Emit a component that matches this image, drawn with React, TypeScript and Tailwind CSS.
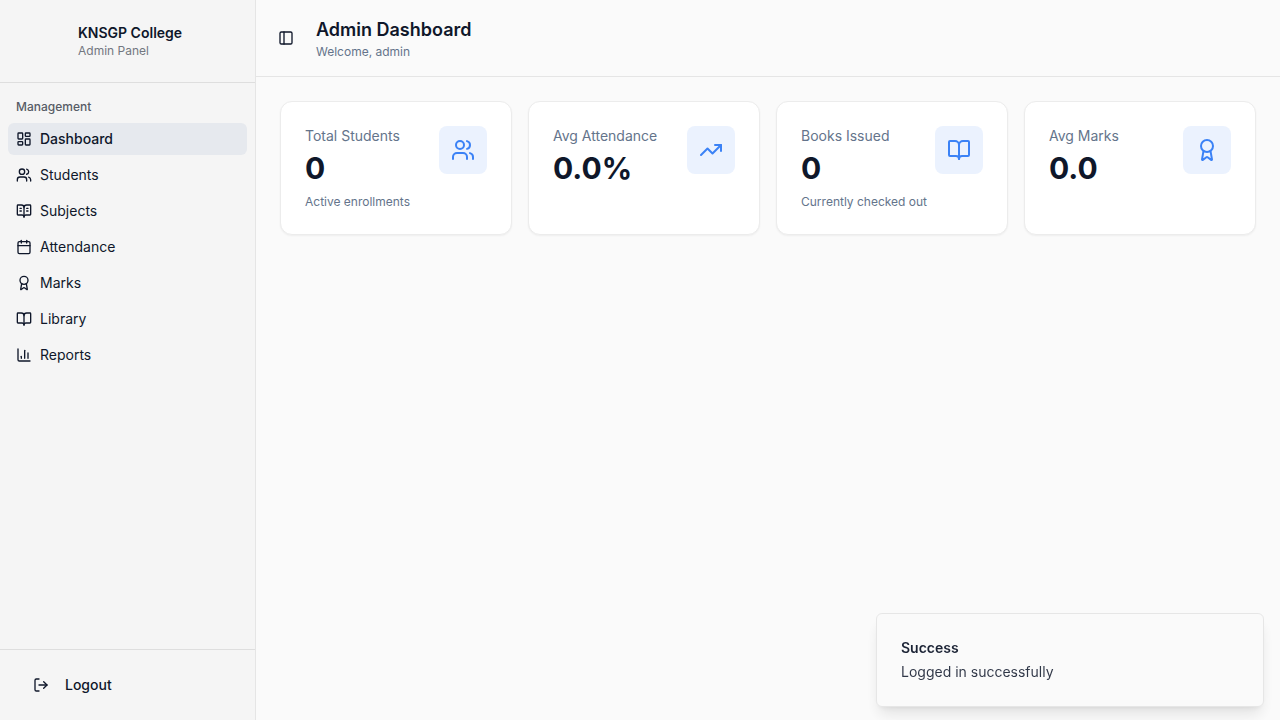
import {
  Award,
  BookOpen,
  BookOpenText,
  Calendar,
  ChartColumn,
  LayoutDashboard,
  LogOut,
  PanelLeft,
  TrendingUp,
  Users,
  type LucideIcon,
} from "lucide-react";

type NavItem = { label: string; icon: LucideIcon; active?: boolean };
type Stat = { label: string; value: string; note?: string; icon: LucideIcon };

const navItems: NavItem[] = [
  { label: "Dashboard", icon: LayoutDashboard, active: true },
  { label: "Students", icon: Users },
  { label: "Subjects", icon: BookOpenText },
  { label: "Attendance", icon: Calendar },
  { label: "Marks", icon: Award },
  { label: "Library", icon: BookOpen },
  { label: "Reports", icon: ChartColumn },
];

const stats: Stat[] = [
  { label: "Total Students", value: "0", note: "Active enrollments", icon: Users },
  { label: "Avg Attendance", value: "0.0%", icon: TrendingUp },
  { label: "Books Issued", value: "0", note: "Currently checked out", icon: BookOpen },
  { label: "Avg Marks", value: "0.0", icon: Award },
];

function Sidebar() {
  return (
    <aside className="flex w-64 shrink-0 flex-col border-r border-[#e5e5e5] bg-[#f5f5f5]">
      <div className="flex items-center gap-3 border-b border-[#dedede] p-4">
        <div className="size-[50px]" />
        <div>
          <h2 className="text-sm font-semibold">KNSGP College</h2>
          <p className="text-xs text-[#737780]">Admin Panel</p>
        </div>
      </div>
      <nav className="flex-1 p-2">
        <div className="flex h-8 items-center px-2 text-xs font-medium text-[#575c66]">Management</div>
        <ul className="flex flex-col gap-1">
          {navItems.map(({ label, icon: Icon, active }) => (
            <li key={label}>
              <button
                className={`flex h-8 w-full items-center gap-2 rounded-md p-2 text-sm ${
                  active ? "bg-[#e6e9ee] font-medium" : ""
                }`}
              >
                <Icon className="size-4 shrink-0" />
                <span>{label}</span>
              </button>
            </li>
          ))}
        </ul>
      </nav>
      <div className="border-t border-[#dedede] p-4">
        <button className="flex h-[38px] w-full items-center gap-4 px-[17px] text-sm font-medium">
          <LogOut className="size-4" />
          Logout
        </button>
      </div>
    </aside>
  );
}

function StatCard({ label, value, note, icon: Icon }: Stat) {
  return (
    <div className="flex items-start justify-between rounded-xl border border-[#ececec] bg-white p-6 shadow-xs">
      <div>
        <p className="text-sm text-[#64748b]">{label}</p>
        <p className="mt-1 text-3xl font-bold">{value}</p>
        {note && <p className="mt-2 text-xs text-[#64748b]">{note}</p>}
      </div>
      <div className="flex size-12 items-center justify-center rounded-lg bg-[#ebf2fe] text-[#3b82f6]">
        <Icon className="size-6" />
      </div>
    </div>
  );
}

export default function App() {
  return (
    <div className="flex h-screen w-full overflow-hidden bg-[#fafafa] font-['Inter',sans-serif] text-[#0f172a]">
      <Sidebar />
      <div className="flex min-w-0 flex-1 flex-col">
        <header className="flex items-center gap-4 border-b border-[#e5e5e5] p-4">
          <button aria-label="Toggle Sidebar" className="flex size-7 items-center justify-center">
            <PanelLeft className="size-4" />
          </button>
          <div>
            <h1 className="text-lg font-semibold">Admin Dashboard</h1>
            <p className="text-xs text-[#64748b]">Welcome, admin</p>
          </div>
        </header>
        <main className="flex-1 p-6">
          <div className="grid grid-cols-4 gap-4">
            {stats.map((stat) => (
              <StatCard key={stat.label} {...stat} />
            ))}
          </div>
        </main>
      </div>
      <div
        role="status"
        className="fixed right-4 bottom-[13px] flex w-[388px] flex-col gap-1 rounded-md border border-[#e5e5e5] bg-[#fafafa] p-6 text-sm opacity-95 shadow-lg will-change-transform"
      >
        <div className="font-semibold">Success</div>
        <div className="opacity-90">Logged in successfully</div>
      </div>
    </div>
  );
}
